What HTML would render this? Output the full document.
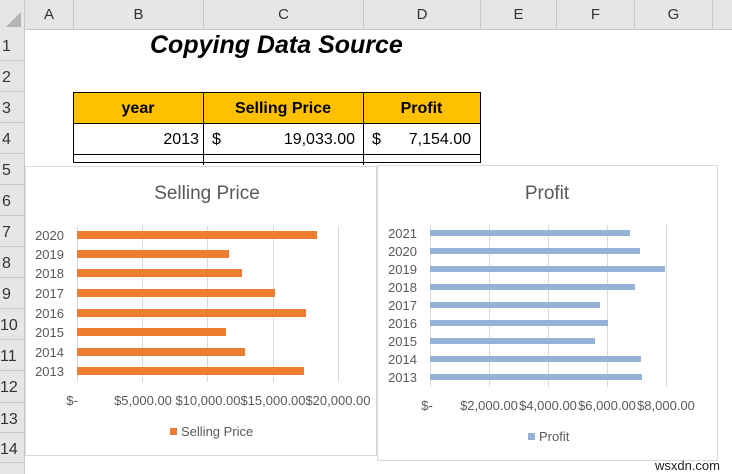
<!DOCTYPE html>
<html><head><meta charset="utf-8"><style>
body{margin:0;width:732px;height:474px;overflow:hidden;background:#fff;font-family:"Liberation Sans",sans-serif;position:relative}
.a{position:absolute}
.hd{background:#e6e6e6}
.cl{position:absolute;top:0;height:30px;line-height:30px;text-align:center;font-size:15px;color:#333;border-right:1px solid #c8c8c8;box-sizing:border-box}
.rl{position:absolute;left:0;width:24px;font-size:16px;color:#333;border-bottom:1px solid #c8c8c8;box-sizing:border-box;padding-left:2px}
.chart{position:absolute;background:#fff;border:1px solid #d9d9d9;box-sizing:border-box}
</style></head><body>
<div class="a hd" style="left:0;top:0;width:732px;height:30px;border-bottom:1px solid #c8c8c8;box-sizing:border-box"></div>
<div class="a hd" style="left:0;top:0;width:25px;height:474px;border-right:1px solid #c8c8c8;box-sizing:border-box"></div>
<svg class="a" style="left:4px;top:10px" width="18" height="18"><polygon points="17,2 17,17 2,17" fill="#b4b4b4"/></svg>
<div class="cl" style="left:25px;width:49px">A</div>
<div class="cl" style="left:74px;width:130px">B</div>
<div class="cl" style="left:204px;width:160px">C</div>
<div class="cl" style="left:364px;width:117px">D</div>
<div class="cl" style="left:481px;width:76px">E</div>
<div class="cl" style="left:557px;width:78px">F</div>
<div class="cl" style="left:635px;width:78px">G</div>
<div class="rl" style="top:30px;height:31px;line-height:33px">1</div>
<div class="rl" style="top:61px;height:31px;line-height:33px">2</div>
<div class="rl" style="top:92px;height:31px;line-height:33px">3</div>
<div class="rl" style="top:123px;height:31px;line-height:33px">4</div>
<div class="rl" style="top:154px;height:31px;line-height:33px">5</div>
<div class="rl" style="top:185px;height:31px;line-height:33px">6</div>
<div class="rl" style="top:216px;height:31px;line-height:33px">7</div>
<div class="rl" style="top:247px;height:31px;line-height:33px">8</div>
<div class="rl" style="top:278px;height:31px;line-height:33px">9</div>
<div class="rl" style="top:309px;height:31px;line-height:33px;padding-left:0">10</div>
<div class="rl" style="top:340px;height:31px;line-height:33px;padding-left:0">11</div>
<div class="rl" style="top:371px;height:32px;line-height:33px;padding-left:0">12</div>
<div class="rl" style="top:403px;height:30px;line-height:33px;padding-left:0">13</div>
<div class="rl" style="top:433px;height:30px;line-height:33px;padding-left:0">14</div>

<div class="a" style="left:150px;top:30px;font-size:25px;font-weight:bold;font-style:italic;line-height:31px;color:#000">Copying Data Source</div>

<div class="a" style="left:73px;top:92px;width:408px;height:31px;background:#ffc000"></div>
<svg class="a" style="left:0;top:0" width="732" height="474">
<g stroke="#000" stroke-width="1" fill="none">
<rect x="73.5" y="92.5" width="407" height="70"/>
<line x1="73" y1="123.5" x2="481" y2="123.5"/>
<line x1="73" y1="154.5" x2="481" y2="154.5"/>
<line x1="203.5" y1="92" x2="203.5" y2="165"/>
<line x1="363.5" y1="92" x2="363.5" y2="165"/>
</g></svg>
<div class="a" style="left:73px;top:92px;width:130px;line-height:33px;text-align:center;font-size:16px;font-weight:bold">year</div>
<div class="a" style="left:203px;top:92px;width:160px;line-height:33px;text-align:center;font-size:16px;font-weight:bold">Selling Price</div>
<div class="a" style="left:363px;top:92px;width:117px;line-height:33px;text-align:center;font-size:16px;font-weight:bold">Profit</div>
<div class="a" style="left:73px;top:123px;width:126px;line-height:33px;text-align:right;font-size:16px">2013</div>
<div class="a" style="left:212px;top:123px;line-height:33px;font-size:16px">$</div>
<div class="a" style="left:203px;top:123px;width:152px;line-height:33px;text-align:right;font-size:16px">19,033.00</div>
<div class="a" style="left:372px;top:123px;line-height:33px;font-size:16px">$</div>
<div class="a" style="left:363px;top:123px;width:108px;line-height:33px;text-align:right;font-size:16px">7,154.00</div>

<div class="chart" style="left:25px;top:166px;width:352px;height:290px"></div>
<div class="chart" style="left:377px;top:165px;width:341px;height:296px"></div>
<svg class="a" style="left:0;top:0" width="732" height="474" font-family="Liberation Sans, sans-serif">
<text x="207" y="199" font-size="19" fill="#595959" text-anchor="middle">Selling Price</text>
<g stroke="#d9d9d9"><line x1="77.5" y1="226" x2="77.5" y2="382"/><line x1="142.5" y1="226" x2="142.5" y2="382"/><line x1="207.5" y1="226" x2="207.5" y2="382"/><line x1="273.5" y1="226" x2="273.5" y2="382"/><line x1="338.5" y1="226" x2="338.5" y2="382"/></g>
<g fill="#ed7d31">
<rect x="77" y="231" width="240" height="8"/><rect x="77" y="250" width="152" height="8"/><rect x="77" y="269" width="165" height="8"/><rect x="77" y="289" width="198" height="8"/><rect x="77" y="309" width="229" height="8"/><rect x="77" y="328" width="149" height="8"/><rect x="77" y="348" width="168" height="8"/><rect x="77" y="367" width="227" height="8"/></g>
<g font-size="13" fill="#595959" text-anchor="end">
<text x="64" y="240">2020</text><text x="64" y="259">2019</text><text x="64" y="278">2018</text><text x="64" y="298">2017</text><text x="64" y="318">2016</text><text x="64" y="337">2015</text><text x="64" y="357">2014</text><text x="64" y="376">2013</text></g>
<g font-size="13" fill="#595959" text-anchor="middle">
<text x="72" y="405">$-</text><text x="143" y="405">$5,000.00</text><text x="208" y="405">$10,000.00</text><text x="273" y="405">$15,000.00</text><text x="338" y="405">$20,000.00</text></g>
<rect x="170" y="428" width="7" height="7" fill="#ed7d31"/>
<text x="181" y="436" font-size="13" fill="#595959">Selling Price</text>

<text x="547" y="199" font-size="19" fill="#595959" text-anchor="middle">Profit</text>
<g stroke="#d9d9d9"><line x1="430.5" y1="225" x2="430.5" y2="387"/><line x1="489.5" y1="225" x2="489.5" y2="387"/><line x1="548.5" y1="225" x2="548.5" y2="387"/><line x1="607.5" y1="225" x2="607.5" y2="387"/><line x1="666.5" y1="225" x2="666.5" y2="387"/></g>
<g fill="#95b3d7">
<rect x="430" y="230" width="200" height="6"/><rect x="430" y="248" width="210" height="6"/><rect x="430" y="266" width="235" height="6"/><rect x="430" y="284" width="205" height="6"/><rect x="430" y="302" width="170" height="6"/><rect x="430" y="320" width="178" height="6"/><rect x="430" y="338" width="165" height="6"/><rect x="430" y="356" width="211" height="6"/><rect x="430" y="374" width="212" height="6"/></g>
<g font-size="13" fill="#595959" text-anchor="end">
<text x="417" y="238">2021</text><text x="417" y="256">2020</text><text x="417" y="274">2019</text><text x="417" y="292">2018</text><text x="417" y="310">2017</text><text x="417" y="328">2016</text><text x="417" y="346">2015</text><text x="417" y="364">2014</text><text x="417" y="382">2013</text></g>
<g font-size="13" fill="#595959" text-anchor="middle">
<text x="427" y="410">$-</text><text x="489" y="410">$2,000.00</text><text x="548" y="410">$4,000.00</text><text x="607" y="410">$6,000.00</text><text x="666" y="410">$8,000.00</text></g>
<rect x="528" y="433" width="7" height="7" fill="#95b3d7"/>
<text x="539" y="441" font-size="13" fill="#595959">Profit</text>
<text x="720" y="470" font-size="13" fill="#222" text-anchor="end">wsxdn.com</text>
</svg>
</body></html>
